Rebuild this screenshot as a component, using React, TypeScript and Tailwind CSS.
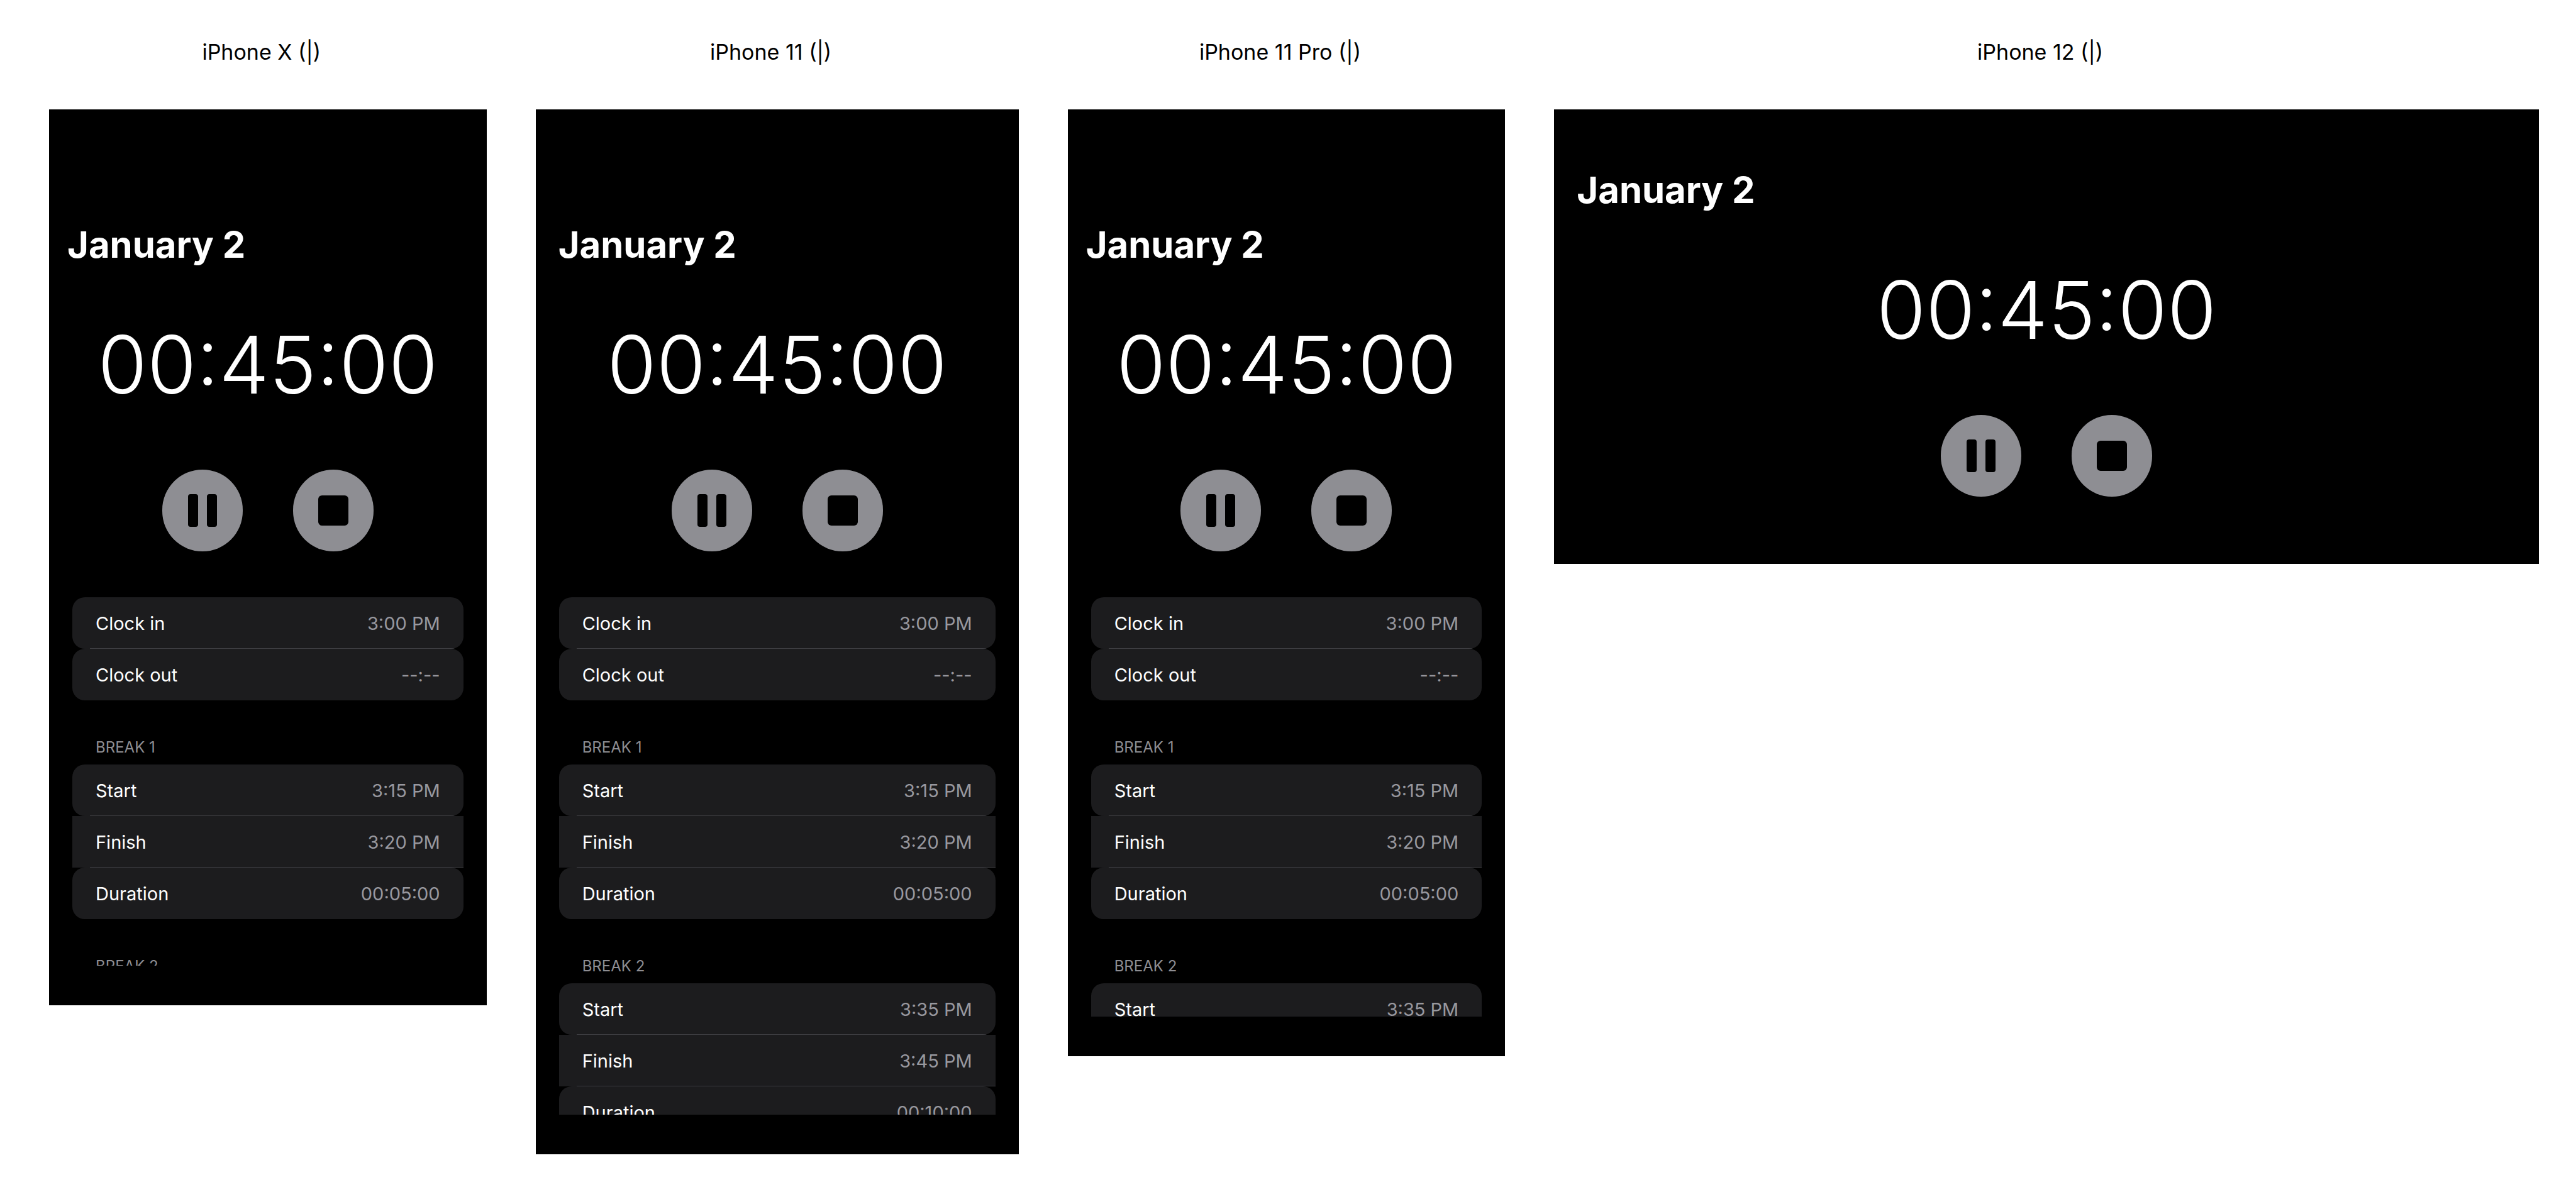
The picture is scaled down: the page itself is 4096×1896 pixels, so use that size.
type Entry = { label: string; value: string };
type Section = { title?: string; rows: Entry[] };
type Device = { name: string; shape: string; inset: string; top: string; sections: Section[] };

const clock: Section = {
  rows: [
    { label: "Clock in", value: "3:00 PM" },
    { label: "Clock out", value: "--:--" },
  ],
};
const breakOne: Section = {
  title: "Break 1",
  rows: [
    { label: "Start", value: "3:15 PM" },
    { label: "Finish", value: "3:20 PM" },
    { label: "Duration", value: "00:05:00" },
  ],
};
const breakTwo: Section = {
  title: "Break 2",
  rows: [
    { label: "Start", value: "3:35 PM" },
    { label: "Finish", value: "3:45 PM" },
    { label: "Duration", value: "00:10:00" },
  ],
};
const timesheet = [clock, breakOne, breakTwo];

const devices: Device[] = [
  { name: "iPhone X (|)", shape: "aspect-[375/768]", inset: "px-[29px]", top: "pt-[175px]", sections: timesheet },
  { name: "iPhone 11 (|)", shape: "aspect-[414/896]", inset: "px-[36px]", top: "pt-[175px]", sections: timesheet },
  { name: "iPhone 11 Pro (|)", shape: "aspect-[375/812]", inset: "px-[29px]", top: "pt-[175px]", sections: timesheet },
  { name: "iPhone 12 (|)", shape: "aspect-[844/390]", inset: "px-[36px]", top: "pt-[88px]", sections: [] },
];

function PauseIcon() {
  return (
    <svg viewBox="0 0 128 130" className="size-full" aria-hidden="true">
      <rect x="41" y="39" width="16" height="52" rx="4" />
      <rect x="71" y="39" width="16" height="52" rx="4" />
    </svg>
  );
}

function StopIcon() {
  return (
    <svg viewBox="0 0 128 130" className="size-full" aria-hidden="true">
      <rect x="40" y="41" width="48" height="48" rx="6" />
    </svg>
  );
}

function SectionList({ section }: { section: Section }) {
  return (
    <section>
      {section.title && (
        <h2 className="flex h-[102px] items-end px-[37px] pb-[11px] text-[24px] leading-8 text-[#8e8e93] uppercase">
          {section.title}
        </h2>
      )}
      <dl>
        {section.rows.map((row, i) => {
          const first = i === 0;
          const last = i === section.rows.length - 1;
          return (
            <div
              key={row.label}
              className={
                "relative flex h-[82px] items-center justify-between overflow-hidden bg-[#1c1c1e] px-[37px] pt-0.5 text-[29px] leading-10" +
                (first || last ? " rounded-[20px]" : "")
              }
            >
              <dt className="text-white">{row.label}</dt>
              <dd className="text-[#98989f]">{row.value}</dd>
              {!last && <span className="absolute right-0 bottom-0 left-7 h-px bg-[#3d3d41]" />}
            </div>
          );
        })}
      </dl>
    </section>
  );
}

function Phone({ device }: { device: Device }) {
  return (
    <figure className="min-w-0">
      <figcaption className="flex h-[174px] items-start justify-center pt-[61px] pr-5 text-[34px] leading-[44px] text-black">
        {device.name}
      </figcaption>
      <div className={"flex flex-col overflow-hidden bg-black pb-[63px] " + device.shape + " " + device.top}>
        <h1 className={"text-[58px] leading-20 font-bold text-white " + device.inset}>January 2</h1>
        <p className="mt-[71px] text-center text-[127px] leading-40 font-light text-white">00:45:00</p>
        <div className="mt-[87px] flex shrink-0 justify-center gap-20">
          <button type="button" aria-label="Pause" className="h-[130px] w-32 rounded-full bg-[#8e8e93]">
            <PauseIcon />
          </button>
          <button type="button" aria-label="Stop" className="h-[130px] w-32 rounded-full bg-[#8e8e93]">
            <StopIcon />
          </button>
        </div>
        {device.sections.length > 0 && (
          <div className="mt-[73px] min-h-0 flex-1 overflow-hidden px-[37px]">
            {device.sections.map((section, i) => (
              <SectionList key={i} section={section} />
            ))}
          </div>
        )}
      </div>
    </figure>
  );
}

export default function App() {
  return (
    <main className="grid min-h-screen grid-cols-[375fr_414fr_375fr_844fr] items-start gap-x-[78px] bg-white pr-[59px] pl-[78px] font-['Inter',sans-serif]">
      {devices.map((device) => (
        <Phone key={device.name} device={device} />
      ))}
    </main>
  );
}
